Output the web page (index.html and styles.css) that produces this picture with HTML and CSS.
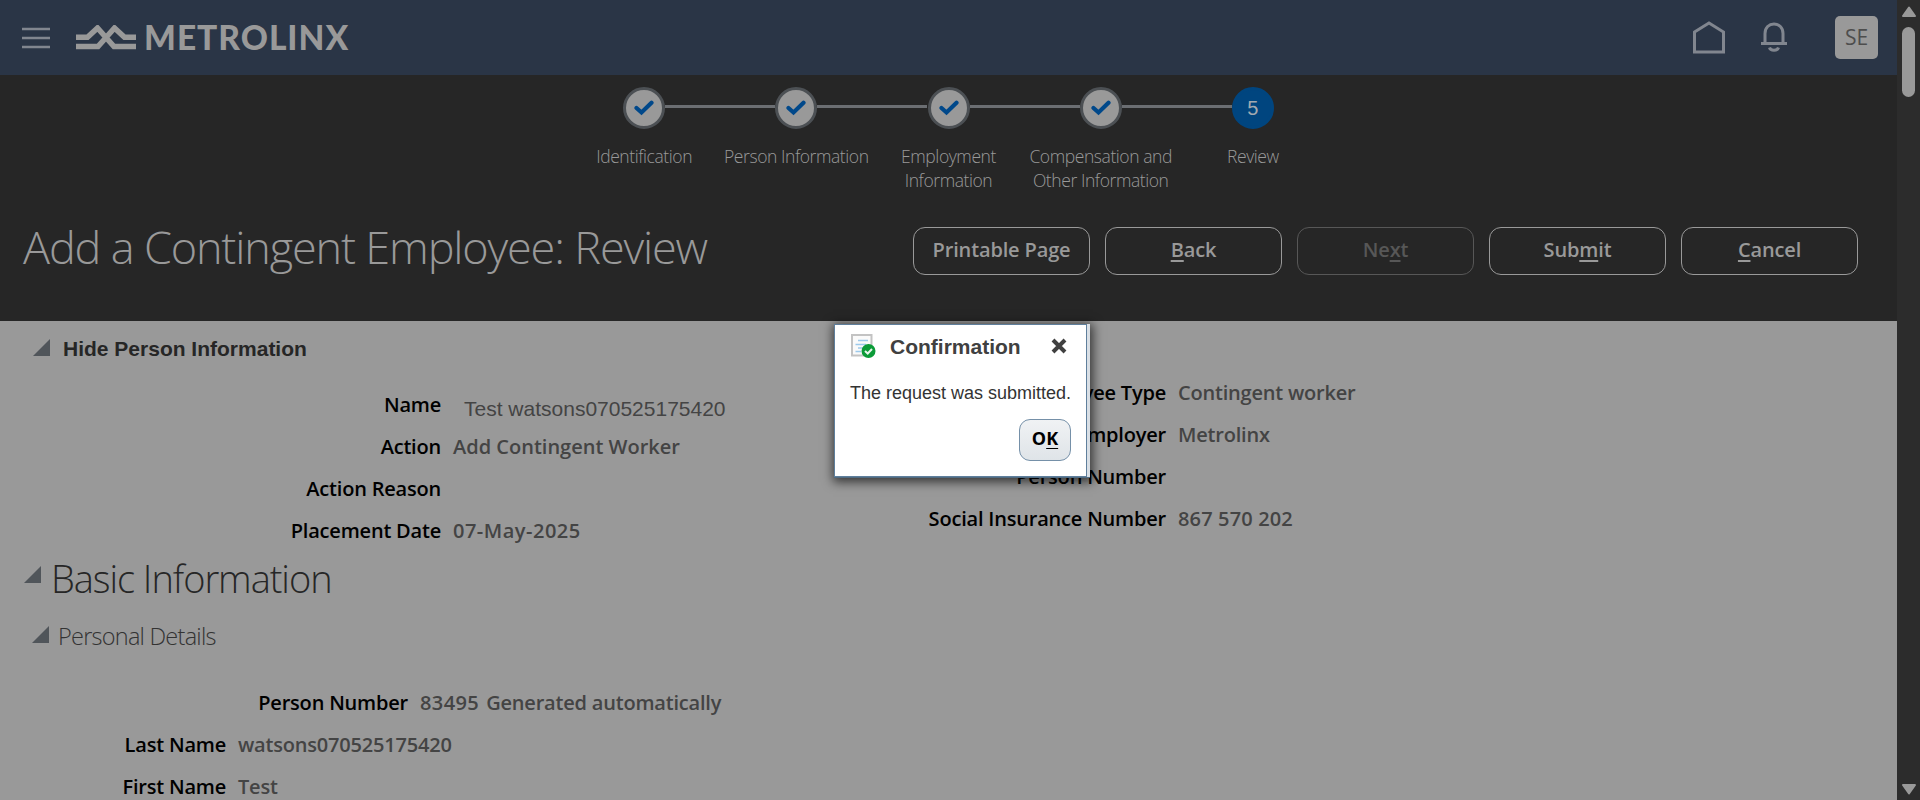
FILE: index.html
```html
<!DOCTYPE html>
<html lang="en">
<head>
<meta charset="utf-8">
<title>Add a Contingent Employee: Review</title>
<link rel="stylesheet" href="styles.css">
</head>
<body>
<div class="page">
  <header class="topbar">
    <svg class="menu" width="28" height="22" viewBox="0 0 28 22"><path d="M0 2h28M0 11h28M0 20h28"/></svg>
    <svg class="mark" width="60" height="26" viewBox="0 0 60 26"><path d="M0 12.3H11.500L21.500 3L38 21.500H60M60 12.300H48.500L38.500 3L22 21.500H0"/></svg>
    <span class="brand">METROLINX</span>
    <div class="tools">
      <svg class="home" width="32" height="33" viewBox="0 0 32 33"><path d="M1.500 11L16 2L30.500 11V31H1.500Z"/></svg>
      <svg class="bell" width="26" height="31" viewBox="0 0 26 31"><path d="M0 21.500H26M4 21.500V11.500C4 5.500 8 2 13 2S22 5.500 22 11.500V21.500"/><path d="M8.500 25.500C9.500 29 16.500 29 17.500 25.500"/></svg>
      <span class="avatar">SE</span>
    </div>
  </header>

  <section class="banner">
    <ol class="train">
      <li class="step"><span class="dot"><svg width="20" height="16" viewBox="0 0 20 16"><path d="M2.500 8L7.500 12.500L17.500 2.800"/></svg></span><span class="step-label">Identification</span></li>
      <li class="step"><span class="dot"><svg width="20" height="16" viewBox="0 0 20 16"><path d="M2.500 8L7.500 12.500L17.500 2.800"/></svg></span><span class="step-label">Person Information</span></li>
      <li class="step"><span class="dot"><svg width="20" height="16" viewBox="0 0 20 16"><path d="M2.500 8L7.500 12.500L17.500 2.800"/></svg></span><span class="step-label">Employment<br>Information</span></li>
      <li class="step"><span class="dot"><svg width="20" height="16" viewBox="0 0 20 16"><path d="M2.500 8L7.500 12.500L17.500 2.800"/></svg></span><span class="step-label">Compensation and<br>Other Information</span></li>
      <li class="step"><span class="dot current">5</span><span class="step-label">Review</span></li>
    </ol>
    <div class="title-row">
      <h1>Add a Contingent Employee: Review</h1>
      <div class="actions">
        <button class="btn">Printable Page</button>
        <button class="btn"><u>B</u>ack</button>
        <button class="btn disabled">Ne<u>x</u>t</button>
        <button class="btn">Sub<u>m</u>it</button>
        <button class="btn"><u>C</u>ancel</button>
      </div>
    </div>
  </section>

  <main class="content">
    <div class="summary-head"><i class="tri"></i><span>Hide Person Information</span></div>
    <div class="summary">
      <dl class="form left">
        <dt>Name</dt><dd class="name">Test watsons070525175420</dd>
        <dt>Action</dt><dd class="action">Add Contingent Worker</dd>
        <dt>Action Reason</dt><dd></dd>
        <dt>Placement Date</dt><dd class="date">07-May-2025</dd>
      </dl>
      <dl class="form right">
        <dt>Employee Type</dt><dd>Contingent worker</dd>
        <dt>Legal Employer</dt><dd>Metrolinx</dd>
        <dt>Person Number</dt><dd></dd>
        <dt>Social Insurance Number</dt><dd class="sin">867 570 202</dd>
      </dl>
    </div>
    <h2><i class="tri"></i><span>Basic Information</span></h2>
    <h3><i class="tri"></i><span>Personal Details</span></h3>
    <dl class="form number"><dt>Person Number</dt><dd><span class="digits">83495</span> <span>Generated automatically</span></dd></dl>
    <dl class="form names">
      <dt>Last Name</dt><dd>watsons070525175420</dd>
      <dt>First Name</dt><dd>Test</dd>
    </dl>
  </main>
</div>

<aside class="scrollbar">
  <svg width="16" height="12" viewBox="0 0 16 12"><path d="M8 1.500L14 10H2Z"/></svg>
  <span class="thumb"></span>
  <svg class="down" width="16" height="12" viewBox="0 0 16 12"><path d="M8 10.500L14 2H2Z"/></svg>
</aside>

<div class="dialog" role="dialog">
  <div class="dialog-body">
    <div class="dialog-head">
      <svg class="confirm" width="25" height="25" viewBox="0 0 25 25">
        <rect x="1" y="1" width="19.500" height="20.500" fill="#fafafa" stroke="#c3c3c3" stroke-width="2"/>
        <path d="M7 6.500H17M4.500 10.500H15M7 14H13M4.500 17.500H10" stroke="#9cc9ec" stroke-width="1.500"/>
        <circle cx="17.500" cy="17" r="7" fill="#0b9b38"/>
        <path d="M14 17L16.700 19.500L21 15" fill="none" stroke="#e8f6ec" stroke-width="2"/>
      </svg>
      <span class="dialog-title">Confirmation</span>
      <svg class="close" width="16" height="16" viewBox="0 0 16 16"><path d="M2 2L14 14M14 2L2 14"/></svg>
    </div>
    <p>The request was submitted.</p>
    <button class="ok">O<u>K</u></button>
  </div>
</div>
</body>
</html>
```
FILE: styles.css
```css
* { box-sizing: border-box; }
body {
  margin: 0;
  width: 1920px;
  height: 800px;
  overflow: hidden;
  display: flex;
  background: #999;
  font-family: "Open Sans", "Noto Sans", sans-serif;
}
svg { display: block; flex: none; }
u { text-underline-offset: 3px; text-decoration-thickness: 2px; text-decoration-skip-ink: none; }
h1, h2, h3, p, dl, dd, ol { margin: 0; padding: 0; }

.page { width: 1897px; height: 800px; overflow: hidden; }

.topbar { height: 75px; display: flex; align-items: center; padding: 0 19px 0 22px; background: #2a3546; }
.menu path { stroke: #81868f; stroke-width: 2.6; }
.mark { margin-left: 26px; }
.mark path { fill: none; stroke: #999; stroke-width: 5.5; }
.brand { margin: -2px 0 0 8px; color: #999; font: 900 33.5px/40px Lato, sans-serif; letter-spacing: 1px; }
.tools { margin-left: auto; display: flex; align-items: center; }
.home path, .bell path { fill: none; stroke: #81868f; stroke-width: 3; }
.bell { margin-left: 36px; }
.avatar {
  margin-left: 48px;
  width: 43px;
  height: 43px;
  border-radius: 5px;
  background: #999;
  color: #4d4d4d;
  font-size: 21px;
  line-height: 43px;
  text-align: center;
}

.banner { height: 246px; background: #262626; color: #999; }
.train { list-style: none; display: flex; width: 761px; margin-left: 568px; padding-top: 12px; height: 146px; }
.step { position: relative; flex: 1; display: flex; flex-direction: column; align-items: center; }
.step + .step::before {
  content: "";
  position: absolute;
  top: 18px;
  left: -55px;
  width: 110px;
  height: 3px;
  background: #6b6e72;
}
.dot {
  width: 42px;
  height: 42px;
  border: 3px solid #4c5054;
  border-radius: 50%;
  background: #999;
  display: flex;
  align-items: center;
  justify-content: center;
}
.dot path { fill: none; stroke: #00488a; stroke-width: 4.2; stroke-linecap: round; }
.dot.current { border-color: #00457f; background: #00457f; color: #a3a9b0; font: 20px "Liberation Sans", sans-serif; }
.step-label { margin-top: 15px; font-size: 17.5px; font-weight: 300; line-height: 24px; text-align: center; white-space: nowrap; letter-spacing: -0.42px; }

.title-row { display: flex; align-items: flex-start; justify-content: space-between; padding: 0 39px 0 23px; }
h1 { font-size: 45px; font-weight: 300; line-height: 60px; letter-spacing: -1.15px; white-space: nowrap; margin-top: -4px; }
.actions { display: flex; gap: 15px; margin-top: 6px; }
.btn {
  width: 177px;
  height: 48px;
  padding: 0 0 3px;
  border: 1px solid #999;
  border-radius: 12px;
  background: none;
  color: #999;
  font: 600 20px/44px "Open Sans", sans-serif;
  letter-spacing: -0.15px;
  white-space: nowrap;
}
.btn.disabled { color: #575757; border-color: #575757; }

.content { color: #444; }
.tri { flex: none; width: 17px; height: 17px; background: #50555a; clip-path: polygon(100% 0, 100% 100%, 0 100%); }
.summary-head { display: flex; padding: 18px 0 0 33px; gap: 13px; height: 51px; color: #262626; font: bold 21px/20px "Liberation Sans", sans-serif; }
.summary { display: flex; height: 180px; }
.form { display: grid; grid-auto-rows: 42px; column-gap: 12px; font-size: 20px; font-weight: 600; line-height: 42px; letter-spacing: -0.2px; white-space: nowrap; }
.form dt { color: #000; text-align: right; }
.left { grid-template-columns: 441px 1fr; width: 800px; padding-top: 12px; }
.right { grid-template-columns: 366px 1fr; width: 700px; }
.form .name { padding: 4px 0 0 11px; font: 21px/42px "Liberation Sans", sans-serif; letter-spacing: 0; }
.action { letter-spacing: 0; }
.date { letter-spacing: 0.5px; }
.sin { letter-spacing: 0.15px; }
.digits { letter-spacing: 0.4px; margin-right: 2px; }
h2 { display: flex; gap: 10px; height: 62px; padding: 14px 0 0 24px; color: #262626; font-size: 38px; font-weight: 300; line-height: 24px; letter-spacing: -1.05px; }
h3 { display: flex; gap: 9px; height: 68px; padding: 12px 0 0 32px; color: #333; font-size: 23.5px; font-weight: 300; line-height: 21px; letter-spacing: -0.75px; }
.number { grid-template-columns: 408px 1fr; }
.names { grid-template-columns: 226px 1fr; }

.scrollbar { width: 23px; height: 800px; background: #2c2c2c; display: flex; flex-direction: column; align-items: center; padding: 6px 0 5px; }
.scrollbar path { fill: #999; stroke: #999; stroke-width: 2; stroke-linejoin: round; }
.thumb { width: 13px; height: 70px; margin-top: 9px; border-radius: 7px; background: #999; }
.down { margin-top: auto; }

.dialog {
  position: absolute;
  left: 834px;
  top: 324px;
  width: 256px;
  height: 154px;
  padding-right: 3px;
  background: #d9dfe5;
  border-bottom: 1px solid #506c83;
  box-shadow: 1px 2px 10px 2px rgba(0, 0, 0, 0.65);
}
.dialog-body { height: 153px; border: 1px solid #5f7f9c; padding: 9px 15px; background: #fff; display: flex; flex-direction: column; }
.dialog-head { display: flex; align-items: flex-start; height: 43px; }
.confirm { margin-left: 1px; }
.dialog-title { margin-left: 14px; color: #404040; font: bold 21px/26px "Liberation Sans", sans-serif; }
.close { margin: 4px 4px 0 auto; }
.close path { stroke: #404040; stroke-width: 4; }
.dialog p { color: #333; font: 18px/32px "Liberation Sans", sans-serif; white-space: nowrap; }
.ok {
  align-self: flex-end;
  width: 52px;
  height: 42px;
  margin-top: 10px;
  padding: 0 0 4px;
  border: 1px solid #7590a8;
  border-radius: 11px;
  background: linear-gradient(#f0f2f4, #dfe4e8);
  color: #000;
  font: 700 18px/30px "Open Sans", sans-serif;
}
.ok u { text-decoration-thickness: 1px; }
```
